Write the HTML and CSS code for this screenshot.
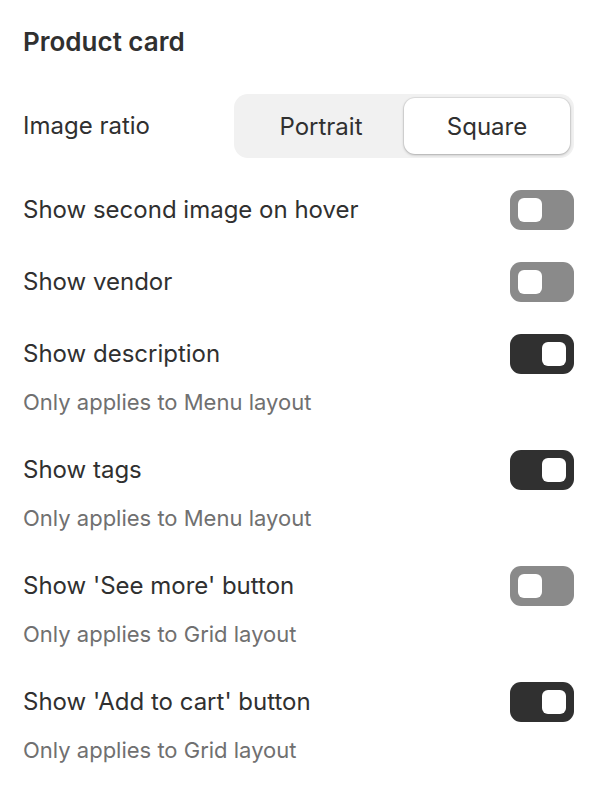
FILE: index.html
```html
<!DOCTYPE html>
<html lang="en">
<head>
<meta charset="utf-8">
<title>Product card</title>
<link rel="stylesheet" href="styles.css">
</head>
<body>
<main class="panel">
  <h1 class="title">Product card</h1>
  <div class="setting ratio">
    <span class="label">Image ratio</span>
    <div class="segmented">
      <button class="seg">Portrait</button>
      <button class="seg active">Square</button>
    </div>
  </div>
  <div class="setting">
    <div class="row"><span class="label">Show second image on hover</span><span class="toggle"><span class="knob"></span></span></div>
  </div>
  <div class="setting">
    <div class="row"><span class="label">Show vendor</span><span class="toggle"><span class="knob"></span></span></div>
  </div>
  <div class="setting">
    <div class="row"><span class="label">Show description</span><span class="toggle on"><span class="knob"></span></span></div>
    <p class="hint">Only applies to Menu layout</p>
  </div>
  <div class="setting">
    <div class="row"><span class="label">Show tags</span><span class="toggle on"><span class="knob"></span></span></div>
    <p class="hint">Only applies to Menu layout</p>
  </div>
  <div class="setting">
    <div class="row"><span class="label">Show 'See more' button</span><span class="toggle"><span class="knob"></span></span></div>
    <p class="hint">Only applies to Grid layout</p>
  </div>
  <div class="setting">
    <div class="row"><span class="label">Show 'Add to cart' button</span><span class="toggle on"><span class="knob"></span></span></div>
    <p class="hint">Only applies to Grid layout</p>
  </div>
</main>
</body>
</html>
```

FILE: styles.css
```css
html, body {
  margin: 0;
  background: #ffffff;
}
body {
  font-family: Inter, "Noto Sans", sans-serif;
  color: #303030;
}
.panel {
  padding: 26px 22px 0 23px;
  display: flex;
  flex-direction: column;
}
.title {
  margin: 0 0 36px;
  font-size: 26px;
  line-height: 32px;
  font-weight: 600;
  color: #303030;
}
.setting {
  display: flex;
  flex-direction: column;
  margin-bottom: 32px;
}
.setting:has(.hint) {
  margin-bottom: 36px;
}
.ratio {
  flex-direction: row;
  align-items: center;
  justify-content: space-between;
}
.row {
  display: flex;
  align-items: center;
  justify-content: space-between;
  height: 40px;
}
.label {
  font-size: 24px;
  line-height: 30px;
  color: #303030;
}
.hint {
  margin: 16px 0 0;
  font-size: 22px;
  line-height: 24px;
  color: #707070;
}
.segmented {
  display: flex;
  width: 340px;
  height: 64px;
  box-sizing: border-box;
  padding: 4px;
  background: #f1f1f1;
  border-radius: 14px;
}
.seg {
  flex: 1;
  border: 0;
  background: transparent;
  font-family: inherit;
  font-size: 24px;
  color: #303030;
  border-radius: 11px;
  padding: 0;
}
.seg.active {
  background: #ffffff;
  box-shadow: 0 1px 3px rgba(0, 0, 0, 0.25), 0 0 0 1px rgba(0, 0, 0, 0.06);
}
.toggle {
  display: flex;
  align-items: center;
  width: 64px;
  height: 40px;
  box-sizing: border-box;
  padding: 0 8px;
  background: #8a8a8a;
  border-radius: 11px;
}
.toggle.on {
  background: #303030;
  justify-content: flex-end;
}
.knob {
  width: 24px;
  height: 24px;
  background: #ffffff;
  border-radius: 6px;
}
```
